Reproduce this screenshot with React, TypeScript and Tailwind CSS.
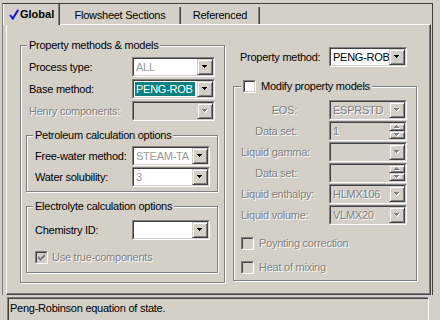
import React from 'react';

const dis = 'text-[#808080] [text-shadow:1px_1px_0_#fff]';

function Arrow({ disabled, up }: { disabled?: boolean; up?: boolean }) {
  const fill = disabled ? '#808080' : '#000';
  const rows = up
    ? [
        [2, 0, 1],
        [1, 1, 3],
        [0, 2, 5],
      ]
    : [
        [0, 0, 5],
        [1, 1, 3],
        [2, 2, 1],
      ];
  return (
    <svg width="6" height="4" viewBox="0 0 6 4" shapeRendering="crispEdges">
      {disabled &&
        rows.map(([x, y, w]) => (
          <rect key={`s${x}${y}`} x={x + 1} y={y + 1} width={w} height={1} fill="#fff" />
        ))}
      {rows.map(([x, y, w]) => (
        <rect key={`r${x}${y}`} x={x} y={y} width={w} height={1} fill={fill} />
      ))}
    </svg>
  );
}

function DropBtn({ disabled }: { disabled?: boolean }) {
  return (
    <div className="flex h-[16px] w-[16px] shrink-0 items-center justify-center border border-t-[#d4d0c8] border-l-[#d4d0c8] border-b-[#404040] border-r-[#404040] bg-[#d4d0c8] shadow-[inset_1px_1px_0_#fff,inset_-1px_-1px_0_#808080]">
      <Arrow disabled={disabled} />
    </div>
  );
}

function SpinBtns() {
  return (
    <div className="flex w-[16px] shrink-0 flex-col">
      <div className="flex h-[8px] items-center justify-center border border-t-[#d4d0c8] border-l-[#d4d0c8] border-b-[#404040] border-r-[#404040] bg-[#d4d0c8] shadow-[inset_1px_1px_0_#fff,inset_-1px_-1px_0_#808080]">
        <Arrow disabled up />
      </div>
      <div className="flex h-[8px] items-center justify-center border border-t-[#d4d0c8] border-l-[#d4d0c8] border-b-[#404040] border-r-[#404040] bg-[#d4d0c8] shadow-[inset_1px_1px_0_#fff,inset_-1px_-1px_0_#808080]">
        <Arrow disabled />
      </div>
    </div>
  );
}

type Variant = 'normal' | 'grayText' | 'selected' | 'disabled';

function Select({
  width,
  value,
  variant,
  spin,
}: {
  width: string;
  value?: string;
  variant: Variant;
  spin?: boolean;
}) {
  const bg = variant === 'disabled' ? 'bg-[#d4d0c8]' : 'bg-white';
  let valueCls = 'text-black';
  if (variant === 'grayText') valueCls = 'text-[#9a9a9a]';
  if (variant === 'disabled') valueCls = dis;
  return (
    <div
      className={`${width} h-[20px] shrink-0 border border-t-[#808080] border-l-[#808080] border-b-white border-r-white`}
    >
      <div
        className={`flex h-full border border-t-[#404040] border-l-[#404040] border-b-[#d4d0c8] border-r-[#d4d0c8] ${bg}`}
      >
        {variant === 'selected' ? (
          <div className="m-[1px] mr-[2px] flex min-w-0 flex-1 items-center overflow-hidden whitespace-nowrap bg-[#0b8080] pl-[1px] text-white">
            {value}
          </div>
        ) : (
          <div
            className={`flex min-w-0 flex-1 items-center overflow-hidden whitespace-nowrap pl-[2px] ${valueCls}`}
          >
            {value}
          </div>
        )}
        {spin ? <SpinBtns /> : <DropBtn disabled={variant === 'disabled'} />}
      </div>
    </div>
  );
}

const CHECK_PX: [number, number][] = [
  [6, 0],
  [5, 1],
  [6, 1],
  [0, 2],
  [4, 2],
  [5, 2],
  [6, 2],
  [0, 3],
  [1, 3],
  [3, 3],
  [4, 3],
  [5, 3],
  [0, 4],
  [1, 4],
  [2, 4],
  [3, 4],
  [4, 4],
  [1, 5],
  [2, 5],
  [3, 5],
  [2, 6],
];

function CheckBox({ checked, disabled }: { checked?: boolean; disabled?: boolean }) {
  return (
    <div className="h-[13px] w-[13px] shrink-0 border border-t-[#808080] border-l-[#808080] border-b-white border-r-white">
      <div
        className={`flex h-full w-full items-center justify-center border border-t-[#404040] border-l-[#404040] border-b-[#d4d0c8] border-r-[#d4d0c8] ${
          disabled ? 'bg-[#d4d0c8]' : 'bg-white'
        }`}
      >
        {checked && (
          <svg width="7" height="7" shapeRendering="crispEdges">
            {CHECK_PX.map(([x, y]) => (
              <rect key={`${x}-${y}`} x={x} y={y} width={1} height={1} fill={disabled ? '#808080' : '#000'} />
            ))}
          </svg>
        )}
      </div>
    </div>
  );
}

const groupCls =
  'relative shrink-0 border border-[#808080] shadow-[inset_1px_1px_0_#fff,1px_1px_0_#fff]';

export default function App() {
  return (
    <div className="h-[320px] w-[440px] overflow-hidden whitespace-nowrap bg-[#d4d0c8] font-['Liberation_Sans',Arial,sans-serif] text-[11px] leading-[13px] tracking-[-0.25px] text-black">
      <div className="h-[3px]" />
      {/* outer frame */}
      <div className="ml-[2px] w-[431px] border-t border-l border-r border-t-[#404040] border-l-[#808080] border-r-[#404040]">
        {/* tabs */}
        <div className="flex h-[20px]">
          <div className="relative z-10 flex h-[21px] w-[57px] items-center border-l border-r border-l-white border-r-[#404040] bg-[#d4d0c8] pl-[5px] shadow-[inset_-1px_0_0_#808080]">
            <svg width="10" height="11" viewBox="0 0 10 11" className="mt-[-1px]">
              <path d="M1 6 L3.8 9.6 L9.2 0.8" fill="none" stroke="#1414e0" strokeWidth="2" strokeLinejoin="miter" />
            </svg>
            <span className="ml-[1px] font-bold tracking-normal">Global</span>
          </div>
          <div className="mt-[3px] flex h-[17px] w-[121px] items-center justify-center border-r border-[#404040] shadow-[inset_-1px_0_0_#808080]">
            Flowsheet Sections
          </div>
          <div className="mt-[3px] flex h-[17px] w-[79px] items-center justify-center border-r border-[#404040] shadow-[inset_-1px_0_0_#808080]">
            Referenced
          </div>
        </div>
        {/* panel */}
        <div className="ml-[3px] flex h-[271px] w-[425px] border border-t-white border-l-white border-r-[#404040] border-b-[#404040] pl-[13px] pt-[20px] shadow-[inset_-1px_-1px_0_#808080]">
          {/* left group */}
          <div className={`${groupCls} h-[238px] w-[205px] pl-[5px] pt-[11px]`}>
            <div className="absolute left-[6px] top-[-7px] bg-[#d4d0c8] px-[2px]">Property methods &amp; models</div>
            <div className="flex flex-col gap-[2px]">
              <div className="flex items-center">
                <div className="w-[106px] pl-[3px]">Process type:</div>
                <Select width="w-[83px]" value="ALL" variant="grayText" />
              </div>
              <div className="flex items-center">
                <div className="w-[106px] pl-[3px]">Base method:</div>
                <Select width="w-[83px]" value="PENG-ROB" variant="selected" />
              </div>
              <div className="flex items-center">
                <div className={`w-[106px] pl-[3px] ${dis}`}>Henry components:</div>
                <Select width="w-[83px]" variant="disabled" />
              </div>
            </div>

            <div className={`${groupCls} mt-[14px] h-[57px] w-[192px] pl-[8px] pt-[10px]`}>
              <div className="absolute left-[6px] top-[-7px] bg-[#d4d0c8] px-[2px]">Petroleum calculation options</div>
              <div className="flex flex-col gap-[1px]">
                <div className="flex items-center">
                  <div className="w-[97px]">Free-water method:</div>
                  <Select width="w-[78px]" value="STEAM-TA" variant="grayText" />
                </div>
                <div className="flex items-center">
                  <div className="w-[97px]">Water solubility:</div>
                  <Select width="w-[78px]" value="3" variant="grayText" />
                </div>
              </div>
            </div>

            <div className={`${groupCls} mt-[14px] h-[67px] w-[192px] pl-[8px] pt-[13px]`}>
              <div className="absolute left-[6px] top-[-7px] bg-[#d4d0c8] px-[2px]">Electrolyte calculation options</div>
              <div className="flex items-center">
                <div className="w-[97px]">Chemistry ID:</div>
                <Select width="w-[78px]" variant="normal" />
              </div>
              <div className="mt-[11px] flex items-center gap-[4px]">
                <CheckBox checked disabled />
                <span className={dis}>Use true-components</span>
              </div>
            </div>
          </div>

          {/* right column */}
          <div className="ml-[8px] w-[184px] shrink-0">
            <div className="mt-[2px] flex items-center">
              <div className="w-[96px] pl-[7px]">Property method:</div>
              <Select width="w-[78px]" value="PENG-ROB" variant="normal" />
            </div>

            <div className={`${groupCls} mt-[19px] h-[195px] w-[184px] pl-[7px] pt-[13px]`}>
              <div className="absolute left-[7px] top-[-7px] flex items-center gap-[5px] bg-[#d4d0c8] px-[2px]">
                <CheckBox />
                <span>Modify property models</span>
              </div>
              <div className="flex flex-col gap-[1px]">
                <div className="flex items-center">
                  <div className={`w-[88px] pr-[32px] text-right ${dis}`}>EOS:</div>
                  <Select width="w-[78px]" value="ESPRSTD" variant="disabled" />
                </div>
                <div className="flex items-center">
                  <div className={`w-[88px] pr-[32px] text-right ${dis}`}>Data set:</div>
                  <Select width="w-[78px]" value="1" variant="disabled" spin />
                </div>
                <div className="flex items-center">
                  <div className={`w-[88px] ${dis}`}>Liquid gamma:</div>
                  <Select width="w-[78px]" variant="disabled" />
                </div>
                <div className="flex items-center">
                  <div className={`w-[88px] pr-[32px] text-right ${dis}`}>Data set:</div>
                  <Select width="w-[78px]" variant="disabled" spin />
                </div>
                <div className="flex items-center">
                  <div className={`w-[88px] ${dis}`}>Liquid enthalpy:</div>
                  <Select width="w-[78px]" value="HLMX106" variant="disabled" />
                </div>
                <div className="flex items-center">
                  <div className={`w-[88px] ${dis}`}>Liquid volume:</div>
                  <Select width="w-[78px]" value="VLMX20" variant="disabled" />
                </div>
              </div>
              <div className="mt-[12px] flex flex-col gap-[11px]">
                <div className="flex items-center gap-[5px]">
                  <CheckBox disabled />
                  <span className={dis}>Poynting correction</span>
                </div>
                <div className="flex items-center gap-[5px]">
                  <CheckBox disabled />
                  <span className={dis}>Heat of mixing</span>
                </div>
              </div>
            </div>
          </div>
        </div>
      </div>
      {/* status bar */}
      <div className="ml-[7px] mt-[2px] h-[25px] w-[422px] border border-t-[#808080] border-l-[#808080] border-r-white border-b-white pl-[2px] pt-[4px] shadow-[inset_1px_1px_0_#404040]">
        Peng-Robinson equation of state.
      </div>
    </div>
  );
}
